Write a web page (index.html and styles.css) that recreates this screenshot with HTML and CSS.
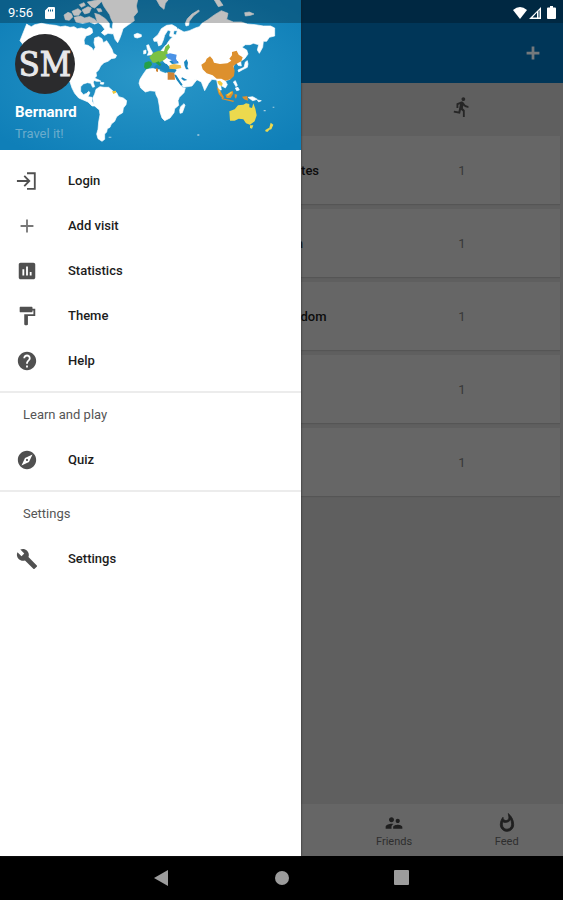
FILE: index.html
```html
<!DOCTYPE html>
<html lang="en">
<head>
<meta charset="utf-8">
<meta name="viewport" content="width=device-width, initial-scale=1">
<title>Travel it!</title>
<link rel="stylesheet" href="styles.css">
</head>
<body>
<div class="app">
  <main class="page">
    <header class="appbar">
      <button class="appbar-add" type="button" aria-label="Add">
        <svg viewBox="0 0 24 24"><path d="M19 13.500h-5.500V19h-3v-5.500H5v-3h5.500V5h3v5.500H19z"/></svg>
      </button>
    </header>
    <table class="visits">
      <colgroup><col class="col-flag"><col class="col-country"><col class="col-count"></colgroup>
      <thead>
        <tr>
          <th></th>
          <th></th>
          <th><svg class="run" viewBox="0 0 24 24" role="img" aria-label="Visits"><path d="M13.49 5.48c1.1 0 2-.9 2-2s-.9-2-2-2-2 .9-2 2 .9 2 2 2zm-3.6 13.9l1-4.4 2.1 2v6h2v-7.5l-2.1-2 .6-3c1.3 1.5 3.3 2.5 5.5 2.5v-2c-1.9 0-3.5-1-4.3-2.4l-1-1.6c-.4-.6-1-1-1.7-1-.3 0-.5.1-.8.1l-5.2 2.2v4.7h2v-3.4l1.8-.7-1.6 8.1-4.9-1-.4 2z"/></svg></th>
        </tr>
      </thead>
      <tbody>
        <tr><td></td><td class="country">United States</td><td>1</td></tr>
        <tr><td></td><td class="country">Sweden</td><td>1</td></tr>
        <tr><td></td><td class="country">United Kingdom</td><td>1</td></tr>
        <tr><td></td><td class="country">Italy</td><td>1</td></tr>
        <tr><td></td><td class="country">Spain</td><td>1</td></tr>
      </tbody>
    </table>
    <nav class="tabs">
      <button class="tab tab-friends" type="button">
        <svg viewBox="0 0 24 24"><path d="M16.5 12c1.38 0 2.49-1.12 2.49-2.5S17.88 7 16.5 7 14 8.12 14 9.5s1.12 2.5 2.5 2.5zM9 11c1.66 0 2.99-1.34 2.99-3S10.66 5 9 5 6 6.34 6 8s1.34 3 3 3zm7.5 3c-1.83 0-5.5.92-5.5 2.75V19h11v-2.25c0-1.83-3.67-2.75-5.5-2.75zM9 13c-2.33 0-7 1.17-7 3.5V19h7v-2.25c0-.85.33-2.34 2.37-3.47C10.5 13.1 9.66 13 9 13z"/></svg>
        <span>Friends</span>
      </button>
      <button class="tab" type="button">
        <svg viewBox="0 0 24 24"><path fill-rule="evenodd" stroke="currentColor" d="M13.5.67s.74 2.65.74 4.8c0 2.06-1.35 3.73-3.41 3.73-2.07 0-3.63-1.67-3.63-3.73l.03-.36C5.21 7.51 4 10.62 4 14c0 4.42 3.58 8 8 8s8-3.58 8-8C20 8.61 17.41 3.8 13.5.67zM12 19.500c-3 0-5.500-2.500-5.500-5.500 0-1.53.3-3.04.86-3.43 1.01 1.01 2.41 1.030 3.470.630 2.66 0 4.75-1.83 5.28-3.43C17.34 9.500 17.500 11.44 17.500 14c0 3-2.500 5.500-5.500 5.500z"/></svg>
        <span>Feed</span>
      </button>
    </nav>
  </main>

  <aside class="drawer">
    <header class="profile">
      <svg class="map" viewBox="0 0 903 450" preserveAspectRatio="xMidYMid slice" aria-hidden="true">
        <defs>
          <radialGradient id="sea" cx="50%" cy="50%" r="65%">
            <stop offset="0" stop-color="#2a97c8"/>
            <stop offset="1" stop-color="#0f7fb8"/>
          </radialGradient>
        </defs>
        <rect width="903" height="450" fill="url(#sea)"/>
        <g fill="#fff" stroke="#fff" stroke-width="2" stroke-linejoin="round">
          <path d="M80 72l6 4 8 4 10-6 20-4 24 4 18 2 16 4 14-2 14 4 12-2 10 6 12-2 14 4 10-6 8 4 2 12-8 6-12 4-6 12 2 14 10 2 12 8 4 8 6-10-4-14 2-14 12-4 10 6 4 12 10-6 8 12 8 14 4 12 10 6-4 8-12 2-10 8-12 4-10 10-6 12-8 8 2 10-8 8-2 12 4 12-6 2-6-12-10-2-12 4-8 8 0 14 8 10 10-4 6-6 4 4-6 12 12 2 0 12 6 8 10 0-2 6-14 0-12-12-14-6-14-6-12-14-8-16-6-18-16-20-70-70-24-16-12-2-14 10-8-6 2-10-8-10z"/>
          <path d="M192 45l12-8 10 4 4 10-10 10-12-2zM216 34l18-8 10 8-8 12-14 0zM222 52l20-4 12 6 14-4 16 8 10 10-10 4-16-6-20 4-20-4zM246 30l18-10 10 4-6 14-14 4zM262 6l30-6 16 0-8 10-16 14-10-4zM238 14l14-6 4 8-12 6zM284 40l14 4 18 12 12 14 0 12 16 10-6 10-14-2-10 6-10-8 10-10-10-14-12-8zM290 26l12 0 4 8-10 2z"/>
          <path d="M303 0h110l-4 18 4 18-12 14 2 12-20 14-14 10-4 14-6 16-6 12-8-10-6-20-2-16 2-14-6-12-4-12-10-14-8-12z"/>
          <path d="M402 104l10-4 12 4 0 6-12 4-8-2zM269 237l14-3 14 6 6 4-14 0-10-4zM302 247l10 1-2 5-9-1z"/>
          <path d="M288 268l12-8 12 2 14 0 14 12 10 4 6 12 14 4 10 8-2 12-8 10-2 14-10 6-8 6-6 14-10 8-4 10-8 4-2 10-6 6 0 16-8 6-12-8-4-14 4-14 2-22 4-22-2-14-12-10-6-14-2-12 6-12z"/>
          <path d="M440 136l6-2 4 10 8 14-2 6-14 2 4-10-4-8zM431 152l7-2 0 10-7 2z"/>
          <path d="M460 116L474 104L484 86L500 76L516 74L530 82L534 92L522 92L520 102L532 108L520 112L508 108L512 94L504 90L494 106L490 120L484 134L476 138L472 124L462 124Z"/>
          <path d="M430 222L440 208L452 206L476 204L480 214L496 220L504 216L526 218L532 236L542 256L550 264L556 264L552 278L538 292L534 302L536 316L524 326L522 338L510 354L494 362L486 354L480 336L478 318L474 296L468 284L466 274L450 272L436 276L422 264L417 250L420 238Z"/>
          <path d="M542 320L552 311L555 316L547 338L540 340L539 330Z"/>
          <path d="M480 156L500 132L512 116L528 104L534 86L552 96L568 92L586 84L598 80L606 70L622 60L644 44L664 32L684 40L680 58L700 66L724 66L742 72L766 74L790 78L812 78L824 84L824 108L808 112L800 124L790 124L788 142L778 160L772 150L776 134L760 130L750 134L736 134L726 142L740 150L744 162L734 176L722 184L724 198L714 196L708 184L700 200L700 220L690 238L676 242L682 254L676 264L662 256L664 270L656 270L650 240L636 238L626 250L614 272L604 246L592 240L580 236L590 240L576 258L550 262L526 222L526 208L510 204L490 184Z"/>
          <path d="M558 78l-2-8 6-14 14-14 20-12 2 4-18 14-12 16-2 12zM643 0l14-2 12 18-14 4zM734 38l14-2 14 6-10 4-16 2zM470 0h34l-8 10-4 18-12-10zM742 202l-16 8-10 6-2-6 18-8 4-16 6-4 2 10zM700 246l6-4 6 14-4 4zM706 264l8-2 4 8-8 2zM744 292l14-2 14 8-14 4zM772 300l12 2-8 4z"/>
        </g>
        <g fill="#1b87be">
          <path d="M552 186l8-8 4 10-2 12 4 8-8 0-4-10zM482 188l18 4 8 8 10 2 12 8-6 8-22 0-8-4-12-6-12 0-10-4 8-8zM508 184l10-4 16 4 2 6-20 2zM522 224l6 0 14 22 6 8-6 2-12-16zM546 232l16 8-10 2-8-6zM498 118l4-14 6 2-2 12-8 16-6 2z"/>
        </g>
        <path fill="#7bc142" d="M448 172l12-14 16-6 16 2 4-14 10-8 4 10-8 12 2 16-12 10-16 8-18 0z"/>
        <path fill="#25a047" d="M434 188l12-4 8 2 2 8-8 10-10 4-6-6zM466 188l10-4 8 10-4 4z"/>
        <path fill="#4a92e6" d="M496 164l14-4 20 4-2 12 6 12-12 2-8-10-10-4z"/>
        <path fill="#efc04c" d="M508 196l14-4 20 4 2 8-18 4-18-2z"/>
        <path fill="#cf8435" d="M503 216l20 2 2 21-22 0zM468 204l6 2 0 10-6-2z"/>
        <path fill="#dd902d" d="M604 194L616 186L620 176L630 169L638 178L642 188L660 192L682 190L694 182L688 176L696 166L696 156L710 152L716 164L728 172L724 184L708 192L700 198L704 212L702 228L692 238L676 242L664 236L650 236L638 226L620 220L608 208Z"/>
        <path fill="#dd902d" d="M650 262l8 6 14 24-4 4-12-14zM676 284l12-4 10-8 2 8-8 14-12 0zM704 282l8 2-4 12-4-4zM664 294l38 8-2 4-34-8zM726 290l16-2 2 14-12-4z"/>
        <path fill="#f0c83e" d="M652 244l8-2 8 8-2 8-8-2-4-6zM654 264l8 12-4 2zM680 284l14-10 2 4-12 10zM336 274l12-2 0 6-8 4z"/>
        <path fill="#ecd94e" d="M688 334L704 328L714 316L730 314L738 310L748 312L748 322L756 324L760 310L766 326L770 346L764 364L750 374L738 370L730 358L716 356L704 362L690 362ZM750 376l10 0-4 10-6-2zM812 368l8 6-6 14-8 2zM796 390l10-6 4 4-8 8-6-2z"/>
        <g fill="#a8cddf"><path d="M791 330h6v4h-6zM818 320h5v3h-5zM592 403h6v4h-6zM326 410h8v3h-8z"/></g>
      </svg>
      <div class="avatar">SM</div>
      <div class="name">Bernanrd</div>
      <div class="tagline">Travel it!</div>
    </header>
    <nav>
      <ul class="menu">
        <li><a href="#login"><svg viewBox="0 0 24 24"><path fill="none" stroke="currentColor" stroke-width="2" d="M1 12h13M9 6.500l5.500 5.500L9 17.500M12 3.500h8.500v17H12"/></svg>Login</a></li>
        <li><a href="#add"><svg class="thin" viewBox="0 0 24 24"><path d="M19 13h-6v6h-2v-6H5v-2h6V5h2v6h6z"/></svg>Add visit</a></li>
        <li><a href="#statistics"><svg viewBox="0 0 24 24"><path d="M19 3H5c-1.100 0-2 .900-2 2v14c0 1.100.900 2 2 2h14c1.100 0 2-.900 2-2V5c0-1.100-.900-2-2-2zM9 17H7v-7h2v7zm4 0h-2V7h2v10zm4 0h-2v-4h2v4z"/></svg>Statistics</a></li>
        <li><a href="#theme"><svg viewBox="0 0 24 24"><path d="M18 4V3c0-.550-.450-1-1-1H5c-.550 0-1 .450-1 1v4c0 .550.450 1 1 1h12c.550 0 1-.450 1-1V6h1v4H9v11c0 .550.450 1 1 1h2c.550 0 1-.450 1-1v-9h8V4h-3z"/></svg>Theme</a></li>
        <li><a href="#help"><svg viewBox="0 0 24 24"><path d="M12 2C6.480 2 2 6.480 2 12s4.480 10 10 10 10-4.480 10-10S17.520 2 12 2zm1 17h-2v-2h2v2zm2.070-7.750l-.900.920C13.450 12.900 13 13.500 13 15h-2v-.500c0-1.100.450-2.100 1.170-2.830l1.240-1.260c.370-.360.590-.860.590-1.410 0-1.100-.900-2-2-2s-2 .900-2 2H8c0-2.210 1.790-4 4-4s4 1.790 4 4c0 .880-.360 1.680-.930 2.250z"/></svg>Help</a></li>
      </ul>
      <h2 class="group">Learn and play</h2>
      <ul class="menu">
        <li><a href="#quiz"><svg viewBox="0 0 24 24"><path d="M12 10.900c-.610 0-1.100.490-1.100 1.100s.490 1.100 1.100 1.100c.610 0 1.100-.490 1.100-1.100s-.490-1.100-1.100-1.100zM12 2C6.480 2 2 6.480 2 12s4.480 10 10 10 10-4.480 10-10S17.520 2 12 2zm2.190 12.190L6 18l3.810-8.190L18 6l-3.810 8.190z"/></svg>Quiz</a></li>
      </ul>
      <h2 class="group">Settings</h2>
      <ul class="menu">
        <li><a href="#settings"><svg viewBox="0 0 24 24"><path d="M22.700 19l-9.100-9.100c.900-2.300.400-5-1.500-6.900-2-2-5-2.400-7.400-1.300L9 6 6 9 1.600 4.700C.400 7.100.900 10.100 2.900 12.100c1.900 1.900 4.600 2.400 6.900 1.500l9.100 9.100c.400.400 1 .400 1.400 0l2.300-2.300c.500-.400.500-1.100.100-1.400z"/></svg>Settings</a></li>
      </ul>
    </nav>
  </aside>

  <div class="status">
    <span>9:56</span>
    <svg class="sd" viewBox="0 0 10 12"><path fill-rule="evenodd" d="M3.500 0H9q1 0 1 1v10q0 1-1 1H1q-1 0-1-1V3.500zM3 2.500v2h1v-2zM5 2.500v2h1v-2zM7 2.500v2h1v-2z"/></svg>
    <svg class="wifi" viewBox="0 0 14 12"><path d="M0 3Q7-3 14 3L7 12z"/></svg>
    <svg class="signal" viewBox="0 0 12 12"><path fill-rule="evenodd" d="M12 0v12H0zM8 5.500L3.500 10.500H8zM9.500 4v6.500h1V3z"/></svg>
    <svg class="battery" viewBox="0 0 9 13"><path d="M3 0h3v1.500h2q1 0 1 1V12q0 1-1 1H1q-1 0-1-1V2.500q0-1 1-1h2z"/></svg>
  </div>
</div>
<nav class="system">
  <button type="button" aria-label="Back"><svg viewBox="0 0 16 16"><path d="M14 0v16L0 8z"/></svg></button>
  <button type="button" aria-label="Home"><svg viewBox="0 0 16 16"><circle cx="8" cy="8" r="7"/></svg></button>
  <button type="button" aria-label="Recent apps"><svg viewBox="0 0 16 16"><rect x="0" y="0" width="15" height="15" rx="1"/></svg></button>
</nav>
</body>
</html>
```

FILE: styles.css
```css
* {
  box-sizing: border-box;
}

body {
  margin: 0;
  min-height: 100vh;
  display: flex;
  flex-direction: column;
  background: #000;
  font-family: Roboto, "Liberation Sans", sans-serif;
  font-size: 13px;
  line-height: 16px;
}

svg {
  display: block;
  fill: currentColor;
}

button {
  padding: 0;
  border: 0;
  background: none;
  font: inherit;
}

.app {
  position: relative;
  flex: 1;
  display: flex;
}

/* Dimmed page behind the drawer */
.page {
  flex: 1;
  display: flex;
  flex-direction: column;
  background: #5f5f5f;
}

.appbar {
  height: 83px;
  padding: 23px 19px 0 0;
  display: flex;
  align-items: center;
  justify-content: flex-end;
  background: #003658;
  color: #74797c;
}

.appbar-add {
  color: inherit;
}

.appbar-add svg {
  width: 22px;
}

.visits {
  width: calc(100% - 3px);
  table-layout: fixed;
  border-collapse: separate;
  border-spacing: 0 5px;
  margin-top: -5px;
}

.col-flag {
  width: 35%;
}

.col-country {
  width: 30%;
}

.visits th {
  height: 48px;
  padding: 0;
}

.visits tbody tr {
  background: #666;
  box-shadow: 0 1px 1px #555;
}

.visits td {
  height: 68px;
  padding: 2px 0 0;
  text-align: center;
  color: #383838;
}

.visits .country {
  font-weight: 500;
  color: #0c0c0c;
}

.run {
  width: 22px;
  margin: 0 auto;
  color: #262626;
}

.tabs {
  margin-top: auto;
  height: 52px;
  display: grid;
  grid-template-columns: repeat(5, 1fr);
  background: #666;
}

.tab {
  padding-top: 2px;
  display: flex;
  flex-direction: column;
  align-items: center;
  justify-content: center;
  gap: 1px;
  font-size: 11px;
  color: #2e2e2e;
}

.tab-friends {
  grid-column: 4;
}

.tab svg {
  width: 20px;
  color: #1f1f1f;
}

/* Navigation drawer */
.drawer {
  position: absolute;
  top: 0;
  bottom: 0;
  left: 0;
  width: 301px;
  max-width: 85%;
  background: #fff;
  box-shadow: 0 0 2px #222;
}

.profile {
  position: relative;
  height: 150px;
  padding: 34px 15px 0;
  color: #fff;
}

.map {
  position: absolute;
  inset: 0;
  width: 100%;
  height: 100%;
}

.avatar {
  position: relative;
  width: 60px;
  height: 60px;
  display: flex;
  align-items: center;
  justify-content: center;
  border-radius: 50%;
  background: #2b2b2d;
  font-family: "DejaVu Serif Condensed", "DejaVu Serif", serif;
  font-size: 34px;
  -webkit-text-stroke: 1px #e8e8ea;
  color: #e8e8ea;
}

.name {
  position: relative;
  margin-top: 8px;
  font-size: 15px;
  line-height: 20px;
  font-weight: 700;
}

.tagline {
  position: relative;
  margin-top: 4px;
  color: #6aaccc;
}

.menu {
  margin: 0;
  padding: 8px 0;
  list-style: none;
}

.menu a {
  height: 45px;
  padding-left: 16px;
  display: flex;
  align-items: center;
  gap: 30px;
  color: #1c1c1c;
  font-weight: 500;
  text-decoration: none;
}

.menu svg {
  width: 22px;
  color: #505050;
}

.menu .thin {
  color: #777;
}

.group {
  height: 46px;
  margin: 0;
  padding-left: 23px;
  border-top: 2px solid #ececec;
  font-size: 13px;
  line-height: 44px;
  font-weight: 400;
  color: #555;
}

.group + .menu {
  padding-top: 0;
}

/* Status bar laid over the page and drawer */
.status {
  position: absolute;
  top: 0;
  left: 0;
  right: 0;
  height: 23px;
  padding: 2px 7px 0 8px;
  display: flex;
  align-items: center;
  background: rgba(0, 0, 0, .25);
  color: #fff;
}

.sd {
  width: 10px;
  margin-left: 12px;
}

.wifi {
  width: 14px;
  margin-left: auto;
}

.signal {
  width: 12px;
  margin: 0 6px 0 2px;
}

.battery {
  width: 9px;
}

/* System navigation */
.system {
  height: 44px;
  display: flex;
  align-items: center;
  justify-content: center;
  gap: 104px;
  color: #9c9c9c;
}

.system button {
  color: inherit;
}

.system svg {
  width: 16px;
}
```
